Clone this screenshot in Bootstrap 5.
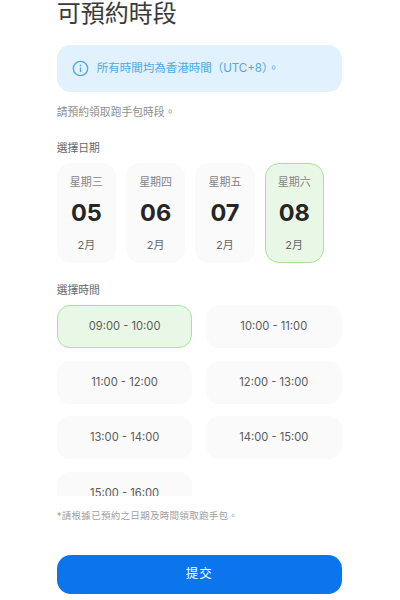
<!DOCTYPE html>
<html lang="zh-Hant">
<head>
<meta charset="utf-8">
<title>可預約時段</title>
<link href="https://cdn.jsdelivr.net/npm/bootstrap@5.3.0/dist/css/bootstrap.min.css" rel="stylesheet">
<style>
html,body{height:600px;overflow:hidden;background:#fff}
body{font-family:Inter,"Noto Sans CJK SC",sans-serif;color:#333}
.page-wrap{width:285px;margin-left:56.7px}
.page-title{font-size:24px;line-height:28px;font-weight:400;color:#3a3a3a;margin:0 0 17px}
.tz-note{height:47px;border-radius:14px;background:#e1f1fe;color:#4aaae8;font-size:11.5px;padding-left:15px;gap:8px}
.sub-note{font-size:10.8px;color:#8f8f8f;line-height:14px;margin:14px 0 22px}
.field-label{font-size:10.8px;line-height:14px;color:#666;margin-bottom:7px}
.date-row{gap:10px;margin-bottom:21px}
.date-card{width:59.3px;height:100px;border-radius:14px;background:#fafafa;border:1px solid #fafafa;flex:none;padding-top:10px}
.date-card .wk{font-size:11px;line-height:16px;color:#858585}
.date-card .dy{font-size:23.5px;line-height:30px;font-weight:700;color:#262626;margin:8px 0 9px}
.date-card .mo{font-size:11px;line-height:16px;color:#666}
.is-picked{background:#e9f8e6!important;border:1.5px solid #a9e29b!important}
.slot-scroll{height:191px;overflow:hidden;display:grid;grid-template-columns:135.8px 135.8px;column-gap:13.4px;row-gap:12.7px;align-content:start;margin-bottom:13px}
.slot{height:43px;border-radius:13px;background:#fafafa;border:1px solid #fafafa;font-size:11.2px;color:#5a5a5a}
.foot-note{font-size:9.5px;line-height:13px;color:#9f9f9f;margin-bottom:33px;letter-spacing:.3px}
.submit-btn{height:39px;border-radius:14px;background:#0a75ec;border:0;color:#fff;font-size:12.5px;letter-spacing:1px}
.submit-btn:hover{background:#0a75ec;color:#fff}
</style>
</head>
<body>
<div class="page-wrap">
  <h1 class="page-title">可預約時段</h1>
  <div class="tz-note d-flex align-items-center">
    <svg width="17" height="17" viewBox="0 0 18 18" fill="none" stroke="#4aaae8" stroke-width="1.4" stroke-linecap="round"><circle cx="9" cy="9" r="7.6"/><path d="M9 8.3v4"/><path d="M9 5.6v.2" stroke-width="1.7"/></svg>
    <span>所有時間均為香港時間（UTC+8）。</span>
  </div>
  <p class="sub-note">請預約領取跑手包時段。</p>
  <div class="field-label">選擇日期</div>
  <div class="date-row d-flex">
    <div class="date-card text-center"><div class="wk">星期三</div><div class="dy">05</div><div class="mo">2月</div></div>
    <div class="date-card text-center"><div class="wk">星期四</div><div class="dy">06</div><div class="mo">2月</div></div>
    <div class="date-card text-center"><div class="wk">星期五</div><div class="dy">07</div><div class="mo">2月</div></div>
    <div class="date-card text-center is-picked"><div class="wk">星期六</div><div class="dy">08</div><div class="mo">2月</div></div>
  </div>
  <div class="field-label">選擇時間</div>
  <div class="slot-scroll">
    <div class="slot is-picked d-flex align-items-center justify-content-center">09:00 - 10:00</div>
    <div class="slot d-flex align-items-center justify-content-center">10:00 - 11:00</div>
    <div class="slot d-flex align-items-center justify-content-center">11:00 - 12:00</div>
    <div class="slot d-flex align-items-center justify-content-center">12:00 - 13:00</div>
    <div class="slot d-flex align-items-center justify-content-center">13:00 - 14:00</div>
    <div class="slot d-flex align-items-center justify-content-center">14:00 - 15:00</div>
    <div class="slot d-flex align-items-center justify-content-center">15:00 - 16:00</div>
  </div>
  <p class="foot-note">*請根據已預約之日期及時間領取跑手包。</p>
  <button type="button" class="btn submit-btn w-100">提交</button>
</div>
<script src="https://cdn.jsdelivr.net/npm/bootstrap@5.3.0/dist/js/bootstrap.bundle.min.js"></script>
</body>
</html>
